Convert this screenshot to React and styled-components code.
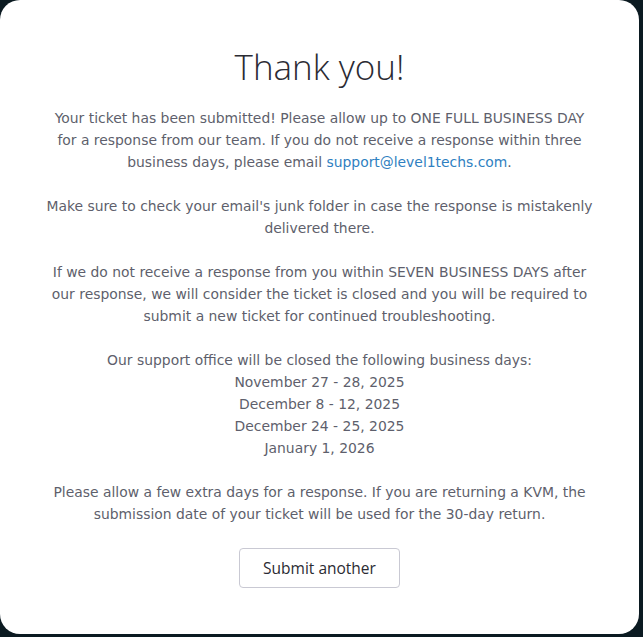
import React from "react";
import styled, { createGlobalStyle } from "styled-components";

const Global = createGlobalStyle`
  html, body {
    margin: 0;
    padding: 0;
    background: #0b1a21;
  }
`;

const Page = styled.div`
  width: 643px;
  height: 637px;
  background: #0b1a21;
  overflow: hidden;
`;

const Card = styled.div`
  width: 639px;
  height: 634px;
  box-sizing: border-box;
  background: #ffffff;
  border-radius: 20px;
  display: flex;
  flex-direction: column;
  align-items: center;
  padding-top: 47px;
`;

const Title = styled.h1`
  margin: 0 0 20px;
  font-family: "Open Sans", sans-serif;
  font-weight: 300;
  font-size: 35px;
  line-height: 40px;
  color: #2b2b33;
`;

const Body = styled.div`
  width: 600px;
  text-align: center;
  font-family: "DejaVu Sans", sans-serif;
  font-size: 13.9px;
  line-height: 22px;
  color: #5e5f6c;
`;

const Para = styled.p`
  margin: 0 0 22px;
`;

const Link = styled.a`
  color: #2f7fc1;
  text-decoration: none;
`;

const Button = styled.button`
  margin-top: 1px;
  width: 161px;
  height: 40px;
  background: #fff;
  border: 1px solid #c9c9d3;
  border-radius: 4px;
  font-family: "Open Sans", sans-serif;
  font-size: 15.5px;
  color: #2b2b33;
`;

const dates = [
  "November 27 - 28, 2025",
  "December 8 - 12, 2025",
  "December 24 - 25, 2025",
  "January 1, 2026",
];

export default function App() {
  return (
    <Page>
      <Global />
      <Card>
        <Title>Thank you!</Title>
        <Body>
          <Para>
            Your ticket has been submitted! Please allow up to ONE FULL BUSINESS DAY
            <br />
            for a response from our team. If you do not receive a response within three
            <br />
            business days, please email{" "}
            <Link href="#">support@level1techs.com</Link>.
          </Para>
          <Para>
            Make sure to check your email's junk folder in case the response is mistakenly
            <br />
            delivered there.
          </Para>
          <Para>
            If we do not receive a response from you within SEVEN BUSINESS DAYS after
            <br />
            our response, we will consider the ticket is closed and you will be required to
            <br />
            submit a new ticket for continued troubleshooting.
          </Para>
          <Para>
            Our support office will be closed the following business days:
            {dates.map((d) => (
              <React.Fragment key={d}>
                <br />
                {d}
              </React.Fragment>
            ))}
          </Para>
          <Para>
            Please allow a few extra days for a response. If you are returning a KVM, the
            <br />
            submission date of your ticket will be used for the 30-day return.
          </Para>
        </Body>
        <Button>Submit another</Button>
      </Card>
    </Page>
  );
}
